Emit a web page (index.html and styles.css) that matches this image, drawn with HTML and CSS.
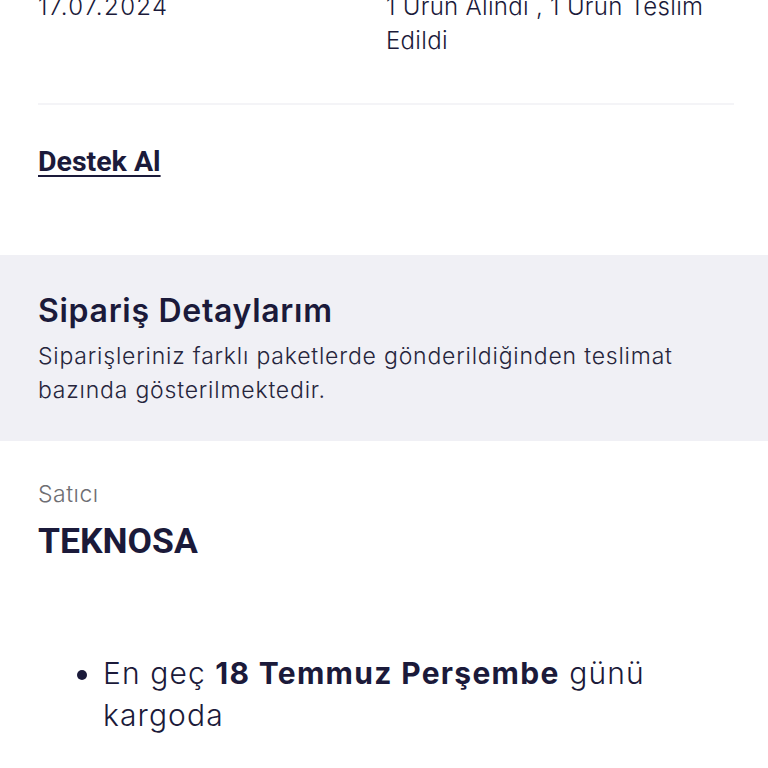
FILE: index.html
```html
<!DOCTYPE html>
<html lang="tr">
<head>
<meta charset="utf-8">
<link rel="stylesheet" href="styles.css">
</head>
<body>
<div class="page">
  <section class="summary">
    <div class="summary-row">
      <div class="summary-date">17.07.2024</div>
      <div class="summary-status">1 Ürün Alındı , 1 Ürün Teslim Edildi</div>
    </div>
  </section>
  <section class="support">
    <a class="support-link" href="#">Destek Al</a>
  </section>
  <section class="details">
    <h2 class="details-title">Sipariş Detaylarım</h2>
    <p class="details-text">Siparişleriniz farklı paketlerde gönderildiğinden teslimat bazında gösterilmektedir.</p>
  </section>
  <section class="seller">
    <div class="seller-label">Satıcı</div>
    <div class="seller-name">TEKNOSA</div>
  </section>
  <ul class="ship-list">
    <li>En geç <b>18 Temmuz Perşembe</b> günü kargoda</li>
  </ul>
</div>
</body>
</html>
```

FILE: styles.css
```css
* { box-sizing: border-box; }
html, body { margin: 0; padding: 0; background: #ffffff; }
body {
  font-family: "Inter", "Open Sans", sans-serif;
  color: #1b1a3a;
  overflow: hidden;
}
.page { width: 768px; height: 768px; overflow: hidden; }

.summary {
  margin: -10px 34px 0 38px;
  padding-bottom: 45px;
  border-bottom: 2px solid #f4f4f7;
}
.summary-row { display: flex; }
.summary-date {
  width: 348px;
  font-size: 24px;
  line-height: 34px;
  font-weight: 300;
  letter-spacing: 1.4px;
}
.summary-status {
  flex: 1;
  font-size: 24px;
  line-height: 34px;
  font-weight: 300;
  letter-spacing: 0.3px;
}

.support { padding: 40px 38px 76px; }
.support-link {
  font-family: "Roboto", sans-serif;
  font-weight: 700;
  font-size: 28.5px;
  line-height: 34px;
  color: #1b1a3a;
  text-decoration: underline;
  text-decoration-thickness: 2px;
  text-underline-offset: 4px;
}

.details {
  background: #f0f0f5;
  padding: 36px 38px 34px;
}
.details-title {
  margin: 0 0 8px;
  font-weight: 600;
  font-size: 32px;
  line-height: 40px;
  letter-spacing: 0.7px;
}
.details-text {
  margin: 0;
  font-size: 23px;
  line-height: 34px;
  font-weight: 300;
  letter-spacing: 0.8px;
  color: #26253c;
}

.seller { padding: 38px 38px 0; }
.seller-label {
  font-size: 23px;
  line-height: 30px;
  font-weight: 300;
  letter-spacing: 0.5px;
  color: #6e6e73;
}
.seller-name {
  margin-top: 12px;
  font-family: "Roboto", sans-serif;
  font-weight: 700;
  font-size: 35.5px;
  line-height: 40px;
}

.ship-list {
  margin: 91px 0 0;
  padding: 0 60px 0 103px;
  font-size: 30px;
  line-height: 42px;
  font-weight: 300;
  letter-spacing: 1.1px;
}
.ship-list b { font-weight: 700; letter-spacing: 1.3px; }
```
